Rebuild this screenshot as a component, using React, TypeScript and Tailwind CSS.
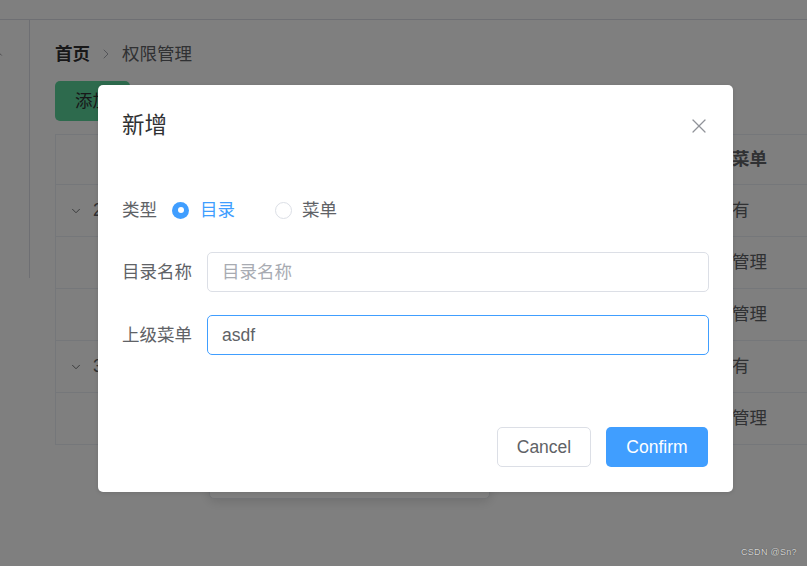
import { X, ChevronDown, ChevronRight, ChevronUp } from "lucide-react";

const rows = [
  { id: "2", menu: "没有", top: true },
  { id: "", menu: "权限管理", top: false },
  { id: "", menu: "权限管理", top: false },
  { id: "3", menu: "没有", top: true },
  { id: "", menu: "权限管理", top: false },
];

const App = () => {
  return (
    <div className="relative w-[807px] h-[566px] overflow-hidden bg-white text-[#303133] font-['Liberation_Sans','Noto_Sans_CJK_SC',sans-serif]">
      {/* Page behind the dialog */}
      <div className="h-[20px] border-b border-[#dcdfe6]"></div>
      <div className="flex">
        <div className="relative w-[30px] h-[258px] border-r border-[#dcdfe6] shrink-0">
          <ChevronUp className="absolute -left-[6px] top-[29px] text-[#606266]" size={10} strokeWidth={1.5} />
        </div>
        <div className="flex-1 pl-[25px]">
          <div className="flex items-center h-[30px] mt-[19px] text-[17.5px]">
            <span className="font-bold text-[#303133]">首页</span>
            <ChevronRight className="mx-[8px] text-[#a8abb2]" size={16} strokeWidth={1.5} />
            <span className="text-[#606266]">权限管理</span>
          </div>
          <button className="mt-[12px] h-[40px] w-[75px] rounded-[5px] bg-[#5ad49a] text-[17.5px] text-[#303133] pl-[20px] text-left">
            添加
          </button>
          <div className="mt-[13px] border-l border-t border-[#ebeef5] text-[17.5px]">
            <div className="flex items-center h-[50px] border-b border-[#ebeef5]">
              <div className="flex-1"></div>
              <div className="w-[110px] text-center font-bold text-[#606266]">上级菜单</div>
              <div className="w-[20px]"></div>
            </div>
            {rows.map((r, i) => (
              <div key={i} className="flex items-center h-[52px] border-b border-[#ebeef5]">
                <div className="flex-1 flex items-center pl-[13px] text-[#606266]">
                  {r.top && (
                    <>
                      <ChevronDown size={14} strokeWidth={1.5} className="text-[#606266]" />
                      <span className="ml-[10px]">{r.id}</span>
                    </>
                  )}
                </div>
                <div className="w-[110px] text-center text-[#606266]">{r.menu}</div>
                <div className="w-[20px]"></div>
              </div>
            ))}
          </div>
        </div>
      </div>

      {/* Dropdown left open beneath the dialog */}
      <div className="absolute left-[209px] top-[360px] w-[281px] h-[139px] bg-white border border-[#e4e7ed] rounded-[5px] shadow-[0_2px_12px_rgba(0,0,0,0.15)]"></div>

      {/* Overlay */}
      <div className="absolute inset-0 bg-black/50 pt-[85px] pl-[98px]">
        <div className="w-[635px] bg-white rounded-[5px] shadow-[0_1px_4px_rgba(0,0,0,0.12)]">
          {/* Header */}
          <div className="flex items-center justify-between pt-[26px] pl-[24px] pr-[22px] pb-[11px]">
            <span className="text-[22.5px] leading-[30px] text-[#303133]">新增</span>
            <X size={24} strokeWidth={1.2} className="text-[#909399]" />
          </div>

          {/* Body */}
          <div className="px-[24px] pt-[38px] pb-[60px] text-[17.5px]">
            <div className="flex items-center h-[40px] mb-[22px]">
              <span className="pr-[15px] text-[#606266]">类型</span>
              <label className="flex items-center mr-[40px]">
                <span className="flex items-center justify-center w-[17px] h-[17px] rounded-full bg-[#409eff]">
                  <span className="w-[6px] h-[6px] rounded-full bg-white"></span>
                </span>
                <span className="pl-[11px] text-[#409eff]">目录</span>
              </label>
              <label className="flex items-center">
                <span className="w-[17px] h-[17px] rounded-full border border-[#dcdfe6] bg-white"></span>
                <span className="pl-[10px] text-[#606266]">菜单</span>
              </label>
            </div>

            <div className="flex items-center h-[40px] mb-[23px]">
              <span className="pr-[15px] text-[#606266]">目录名称</span>
              <div className="flex-1 flex items-center h-[40px] px-[14px] border border-[#dcdfe6] rounded-[5px] text-[#a8abb2]">
                目录名称
              </div>
            </div>

            <div className="flex items-center h-[40px]">
              <span className="pr-[15px] text-[#606266]">上级菜单</span>
              <div className="flex-1 flex items-center h-[40px] px-[14px] border border-[#409eff] rounded-[5px] text-[#606266]">
                asdf
              </div>
            </div>
          </div>

          {/* Footer */}
          <div className="flex justify-end gap-[15px] pr-[25px] pt-[12px] pb-[25px] text-[17.5px]">
            <button className="h-[40px] w-[94px] rounded-[5px] border border-[#dcdfe6] bg-white text-[#606266]">
              Cancel
            </button>
            <button className="h-[40px] w-[102px] rounded-[5px] bg-[#409eff] text-white">
              Confirm
            </button>
          </div>
        </div>
      </div>

      {/* Watermark */}
      <span className="absolute left-[741px] top-[546px] text-[9px] text-[#d6d6d6] tracking-[0.3px] [text-shadow:0_0_1px_rgba(0,0,0,0.6)]">
        CSDN @Sn?
      </span>
    </div>
  );
};

export default App;
